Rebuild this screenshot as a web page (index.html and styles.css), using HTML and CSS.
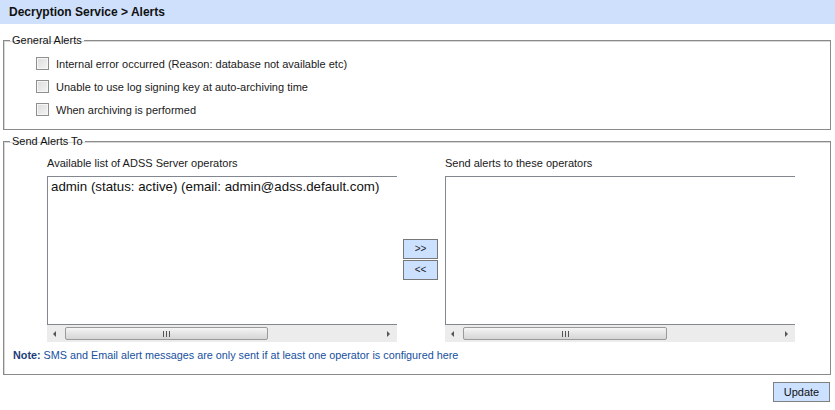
FILE: index.html
```html
<!DOCTYPE html>
<html>
<head>
<meta charset="utf-8">
<link rel="stylesheet" href="styles.css">
</head>
<body>
<div class="header">Decryption Service &gt; Alerts</div>

<fieldset class="group general">
  <legend>General Alerts</legend>
  <div class="checks">
    <label class="check-row"><span class="checkbox"></span><span>Internal error occurred (Reason: database not available etc)</span></label>
    <label class="check-row"><span class="checkbox"></span><span>Unable to use log signing key at auto-archiving time</span></label>
    <label class="check-row"><span class="checkbox"></span><span>When archiving is performed</span></label>
  </div>
</fieldset>

<fieldset class="group send">
  <legend>Send Alerts To</legend>
  <div class="lists">
    <div class="list-label">Available list of ADSS Server operators</div>
    <div></div>
    <div class="list-label">Send alerts to these operators</div>

    <div class="list-pane">
      <div class="listbox"><div class="option">admin (status: active) (email: admin@adss.default.com)</div></div>
      <div class="hscroll">
        <span class="arrow left"></span>
        <span class="thumb thumb-left"><span class="grip"></span></span>
        <span class="arrow right"></span>
      </div>
    </div>
    <div class="movers">
      <button class="mover">&gt;&gt;</button>
      <button class="mover">&lt;&lt;</button>
    </div>
    <div class="list-pane">
      <div class="listbox"></div>
      <div class="hscroll">
        <span class="arrow left"></span>
        <span class="thumb thumb-right"><span class="grip"></span></span>
        <span class="arrow right"></span>
      </div>
    </div>
  </div>
  <div class="note"><b>Note:</b> SMS and Email alert messages are only sent if at least one operator is configured here</div>
</fieldset>

<div class="actions"><button class="update">Update</button></div>
</body>
</html>
```

FILE: styles.css
```css
html, body {
  margin: 0;
  padding: 0;
  background: #ffffff;
}
body {
  font-family: "Liberation Sans", Arial, sans-serif;
  font-size: 11px;
  color: #1a1a1a;
  width: 835px;
  height: 410px;
  overflow: hidden;
}
.header {
  height: 24px;
  line-height: 25px;
  background: #cfe0fc;
  padding-left: 9px;
  font-weight: bold;
  font-size: 12px;
  color: #111;
}
.group {
  border: 1px solid #8a8a8a;
  box-shadow: inset 1px 1px 0 #d8d8d8;
  margin: 0 4px 0 3px;
  padding: 0;
  min-width: 0;
}
.group legend {
  font-size: 11px;
  line-height: 13px;
  padding: 0 2px;
  margin-left: 6px;
  color: #111;
}
.general {
  margin-top: 10px;
  padding: 5px 0 8px 0;
}
.checks {
  display: flex;
  flex-direction: column;
  padding-left: 32px;
}
.check-row {
  display: flex;
  align-items: center;
  gap: 7px;
  height: 23px;
}
.checkbox {
  width: 11px;
  height: 11px;
  border: 1px solid #8e8f8f;
  background: linear-gradient(135deg, #dcdcdc 0%, #f4f4f4 100%);
  box-shadow: inset 0 0 0 1px #f6f6f6;
}
.send {
  margin-top: 5px;
  padding: 9px 0 12px 0;
}
.lists {
  display: grid;
  grid-template-columns: 350px 48px 350px;
  margin-left: 43px;
}
.list-label {
  line-height: 13px;
  margin-bottom: 6px;
}
.list-pane {
  display: flex;
  flex-direction: column;
}
.listbox {
  height: 147px;
  border-top: 1px solid #828790;
  border-left: 1px solid #828790;
  border-bottom: 1px solid #828790;
  background: #fff;
}
.option {
  font-size: 13.3px;
  line-height: 16px;
  padding: 2px 0 0 3px;
  color: #111;
}
.hscroll {
  height: 17px;
  background: #ececec;
  display: flex;
  align-items: center;
}
.arrow {
  width: 0;
  height: 0;
  border-top: 3px solid transparent;
  border-bottom: 3px solid transparent;
}
.arrow.left {
  border-right: 3px solid #555;
  margin-left: 6px;
}
.arrow.right {
  border-left: 3px solid #555;
  margin-left: auto;
  margin-right: 7px;
}
.thumb {
  height: 13px;
  box-sizing: border-box;
  border: 1px solid #9a9a9a;
  border-radius: 2px;
  background: linear-gradient(#f6f6f6, #e4e4e4 50%, #d6d6d6);
  display: flex;
  align-items: center;
  justify-content: center;
}
.thumb-left {
  width: 203px;
  margin-left: 9px;
}
.thumb-right {
  width: 204px;
  margin-left: 9px;
}
.grip {
  width: 7px;
  height: 6px;
  background: repeating-linear-gradient(90deg, #555 0 1px, transparent 1px 3px);
}
.movers {
  display: flex;
  flex-direction: column;
  justify-content: center;
  align-items: flex-start;
  padding-left: 6px;
  gap: 1px;
}
.mover {
  width: 35px;
  height: 20px;
  border: 1px solid #777;
  background: #cce0ff;
  font-family: "Liberation Sans", Arial, sans-serif;
  font-size: 10px;
  color: #222;
  padding: 0;
  margin: 0;
}
.note {
  margin-top: 7px;
  margin-left: 9px;
  line-height: 13px;
  font-size: 10.8px;
  color: #1650a0;
}
.note b {
  color: #1d3c78;
}
.actions {
  display: flex;
  justify-content: flex-end;
  padding: 7px 5px 0 0;
}
.update {
  width: 57px;
  height: 20px;
  border: 1px solid #808080;
  background: #cce0ff;
  font-family: "Liberation Sans", Arial, sans-serif;
  font-size: 11px;
  color: #111;
  padding: 0;
  margin: 0;
}
```
